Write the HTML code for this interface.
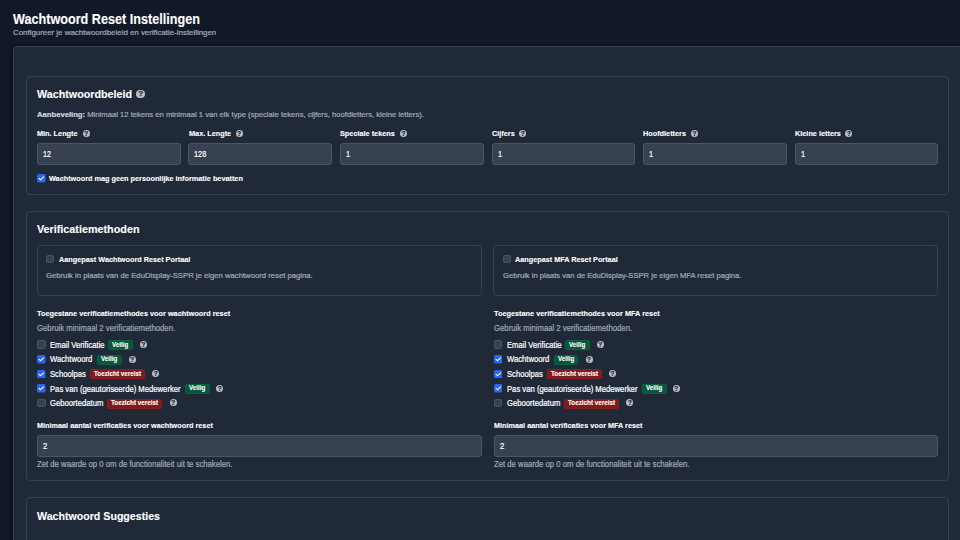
<!DOCTYPE html>
<html><head><meta charset="utf-8"><style>
html,body{margin:0;padding:0;}
body{width:960px;height:540px;overflow:hidden;background:#111827;position:relative;font-family:"Liberation Sans", sans-serif;}
.t{position:absolute;white-space:nowrap;line-height:normal;transform-origin:0 0;}
.b{position:absolute;}
.hi{border-radius:50%;background:#b9bec6;text-align:center;overflow:hidden;}
.hi span{display:block;font-weight:bold;color:#1a2230;-webkit-text-stroke:0.2px #1a2230;}
</style></head><body>
<div id="t0" class="t" style="left:13.00px;top:11.23px;font-size:14px;font-weight:bold;color:#ffffff;transform:scaleX(0.9021);-webkit-text-stroke:0.12px currentColor;">Wachtwoord Reset Instellingen</div>
<div id="t1" class="t" style="left:13.00px;top:27.66px;font-size:8.0px;font-weight:normal;color:#a1a8b3;transform:scaleX(0.9850);-webkit-text-stroke:0.22px currentColor;">Configureer je wachtwoordbeleid en verificatie-instellingen</div>
<div class="b" style="left:13.00px;top:46.00px;width:1000.00px;height:600.00px;background:#1f2937;border:1px solid #374151;border-radius:4px;box-sizing:border-box;box-shadow:0 0 3px 1px rgba(0,0,0,.35);"></div>
<div class="b" style="left:26.00px;top:76.00px;width:923.00px;height:118.50px;border:1px solid #374151;border-radius:4px;box-sizing:border-box;"></div>
<div id="t2" class="t" style="left:37.00px;top:88.23px;font-size:10.8px;font-weight:bold;color:#fff;transform:scaleX(0.9940);-webkit-text-stroke:0.12px currentColor;">Wachtwoordbeleid</div>
<div class="b hi" style="left:136.30px;top:89.60px;width:8.8px;height:8.8px;"><span style="font-size:8.10px;line-height:8.8px;">?</span></div>
<div id="t3" class="t" style="left:37.00px;top:110.22px;font-size:7.6px;font-weight:normal;color:#a1a8b3;transform:scaleX(1.0085);-webkit-text-stroke:0.22px currentColor;"><b style="color:#d1d5db">Aanbeveling:</b> Minimaal 12 tekens en minimaal 1 van elk type (speciale tekens, cijfers, hoofdletters, kleine letters).</div>
<div id="t4" class="t" style="left:37.00px;top:129.32px;font-size:7.6px;font-weight:bold;color:#ffffff;transform:scaleX(0.9613);-webkit-text-stroke:0.12px currentColor;">Min. Lengte</div>
<div class="b hi" style="left:82.65px;top:130.40px;width:7.0px;height:7.0px;"><span style="font-size:6.44px;line-height:7.0px;">?</span></div>
<div class="b" style="left:37.00px;top:143.00px;width:144.00px;height:21.70px;background:#374151;border:1px solid #4b5563;border-radius:3px;box-sizing:border-box;"></div>
<div id="t5" class="t" style="left:43.00px;top:148.74px;font-size:8.8px;font-weight:normal;color:#ffffff;transform:scaleX(0.8166);-webkit-text-stroke:0.22px currentColor;">12</div>
<div id="t6" class="t" style="left:188.50px;top:129.32px;font-size:7.6px;font-weight:bold;color:#ffffff;transform:scaleX(0.9612);-webkit-text-stroke:0.12px currentColor;">Max. Lengte</div>
<div class="b hi" style="left:235.79px;top:130.40px;width:7.0px;height:7.0px;"><span style="font-size:6.44px;line-height:7.0px;">?</span></div>
<div class="b" style="left:188.00px;top:143.00px;width:144.00px;height:21.70px;background:#374151;border:1px solid #4b5563;border-radius:3px;box-sizing:border-box;"></div>
<div id="t7" class="t" style="left:194.00px;top:148.74px;font-size:8.8px;font-weight:normal;color:#ffffff;transform:scaleX(0.8306);-webkit-text-stroke:0.22px currentColor;">128</div>
<div id="t8" class="t" style="left:340.00px;top:129.32px;font-size:7.6px;font-weight:bold;color:#ffffff;transform:scaleX(0.9611);-webkit-text-stroke:0.12px currentColor;">Speciale tekens</div>
<div class="b hi" style="left:399.88px;top:130.40px;width:7.0px;height:7.0px;"><span style="font-size:6.44px;line-height:7.0px;">?</span></div>
<div class="b" style="left:340.00px;top:143.00px;width:144.00px;height:21.70px;background:#374151;border:1px solid #4b5563;border-radius:3px;box-sizing:border-box;"></div>
<div id="t9" class="t" style="left:346.00px;top:148.74px;font-size:8.8px;font-weight:normal;color:#ffffff;transform:scaleX(0.8153);-webkit-text-stroke:0.22px currentColor;">1</div>
<div id="t10" class="t" style="left:491.50px;top:129.32px;font-size:7.6px;font-weight:bold;color:#ffffff;transform:scaleX(0.9611);-webkit-text-stroke:0.12px currentColor;">Cijfers</div>
<div class="b hi" style="left:519.32px;top:130.40px;width:7.0px;height:7.0px;"><span style="font-size:6.44px;line-height:7.0px;">?</span></div>
<div class="b" style="left:492.00px;top:143.00px;width:143.00px;height:21.70px;background:#374151;border:1px solid #4b5563;border-radius:3px;box-sizing:border-box;"></div>
<div id="t11" class="t" style="left:498.00px;top:148.74px;font-size:8.8px;font-weight:normal;color:#ffffff;transform:scaleX(0.8153);-webkit-text-stroke:0.22px currentColor;">1</div>
<div id="t12" class="t" style="left:643.00px;top:129.32px;font-size:7.6px;font-weight:bold;color:#ffffff;transform:scaleX(0.9610);-webkit-text-stroke:0.12px currentColor;">Hoofdletters</div>
<div class="b hi" style="left:691.09px;top:130.40px;width:7.0px;height:7.0px;"><span style="font-size:6.44px;line-height:7.0px;">?</span></div>
<div class="b" style="left:643.00px;top:143.00px;width:144.00px;height:21.70px;background:#374151;border:1px solid #4b5563;border-radius:3px;box-sizing:border-box;"></div>
<div id="t13" class="t" style="left:649.00px;top:148.74px;font-size:8.8px;font-weight:normal;color:#ffffff;transform:scaleX(0.8153);-webkit-text-stroke:0.22px currentColor;">1</div>
<div id="t14" class="t" style="left:794.50px;top:129.32px;font-size:7.6px;font-weight:bold;color:#ffffff;transform:scaleX(0.9611);-webkit-text-stroke:0.12px currentColor;">Kleine letters</div>
<div class="b hi" style="left:845.45px;top:130.40px;width:7.0px;height:7.0px;"><span style="font-size:6.44px;line-height:7.0px;">?</span></div>
<div class="b" style="left:795.00px;top:143.00px;width:143.00px;height:21.70px;background:#374151;border:1px solid #4b5563;border-radius:3px;box-sizing:border-box;"></div>
<div id="t15" class="t" style="left:801.00px;top:148.74px;font-size:8.8px;font-weight:normal;color:#ffffff;transform:scaleX(0.8153);-webkit-text-stroke:0.22px currentColor;">1</div>
<svg class="b" style="left:37.00px;top:174.00px" width="8.6" height="8.6" viewBox="0 0 16 16"><rect x="0" y="0" width="16" height="16" rx="3.5" fill="#2a66ee"/><path d="M3.8 8.3L6.7 10.8L12.4 5.4" stroke="#fff" stroke-width="1.9" fill="none" stroke-linecap="round" stroke-linejoin="round"/></svg>
<div id="t16" class="t" style="left:49.40px;top:173.72px;font-size:7.6px;font-weight:bold;color:#ffffff;transform:scaleX(0.9606);-webkit-text-stroke:0.12px currentColor;">Wachtwoord mag geen persoonlijke informatie bevatten</div>
<div class="b" style="left:26.00px;top:211.25px;width:923.00px;height:269.50px;border:1px solid #374151;border-radius:4px;box-sizing:border-box;"></div>
<div id="t17" class="t" style="left:36.90px;top:222.63px;font-size:10.8px;font-weight:bold;color:#fff;-webkit-text-stroke:0.12px currentColor;">Verificatiemethoden</div>
<div class="b" style="left:37.40px;top:245.00px;width:445.00px;height:51.00px;border:1px solid #374151;border-radius:4px;box-sizing:border-box;"></div>
<div class="b" style="left:46.10px;top:255.00px;width:7.90px;height:7.90px;background:#374151;border:1px solid #4b5563;border-radius:2px;box-sizing:border-box;"></div>
<div id="t18" class="t" style="left:58.50px;top:254.72px;font-size:7.6px;font-weight:bold;color:#ffffff;transform:scaleX(0.9594);-webkit-text-stroke:0.12px currentColor;">Aangepast Wachtwoord Reset Portaal</div>
<div id="t19" class="t" style="left:46.00px;top:271.21px;font-size:7.5px;font-weight:normal;color:#a1a8b3;transform:scaleX(1.0270);-webkit-text-stroke:0.22px currentColor;">Gebruik in plaats van de EduDisplay-SSPR je eigen wachtwoord reset pagina.</div>
<div id="t20" class="t" style="left:37.40px;top:309.22px;font-size:7.6px;font-weight:bold;color:#ffffff;transform:scaleX(0.9645);-webkit-text-stroke:0.12px currentColor;">Toegestane verificatiemethodes voor wachtwoord reset</div>
<div id="t21" class="t" style="left:37.20px;top:322.82px;font-size:8.6px;font-weight:normal;color:#a1a8b3;transform:scaleX(0.9007);-webkit-text-stroke:0.22px currentColor;">Gebruik minimaal 2 verificatiemethoden.</div>
<div class="b" style="left:37.10px;top:340.40px;width:8.50px;height:8.50px;background:#374151;border:1px solid #4b5563;border-radius:2px;box-sizing:border-box;"></div>
<div id="t22" class="t" style="left:49.80px;top:339.72px;font-size:8.6px;font-weight:normal;color:#ffffff;transform:scaleX(0.8936);-webkit-text-stroke:0.22px currentColor;">Email Verificatie</div>
<div class="b" style="left:108.30px;top:340.10px;width:24.90px;height:10.10px;background:#05583c;border:1px solid #086240;box-sizing:border-box;border-radius:2px;"></div>
<div id="t23" class="t" style="left:112.35px;top:340.66px;font-size:7.0px;font-weight:bold;color:#ffffff;transform:scaleX(0.8854);-webkit-text-stroke:0.12px currentColor;">Veilig</div>
<div class="b hi" style="left:140.00px;top:341.00px;width:7.0px;height:7.0px;"><span style="font-size:6.44px;line-height:7.0px;">?</span></div>
<svg class="b" style="left:37.10px;top:355.00px" width="8.5" height="8.5" viewBox="0 0 16 16"><rect x="0" y="0" width="16" height="16" rx="3.5" fill="#2a66ee"/><path d="M3.8 8.3L6.7 10.8L12.4 5.4" stroke="#fff" stroke-width="1.9" fill="none" stroke-linecap="round" stroke-linejoin="round"/></svg>
<div id="t24" class="t" style="left:49.80px;top:354.32px;font-size:8.6px;font-weight:normal;color:#ffffff;transform:scaleX(0.8935);-webkit-text-stroke:0.22px currentColor;">Wachtwoord</div>
<div class="b" style="left:96.90px;top:354.70px;width:24.90px;height:10.10px;background:#05583c;border:1px solid #086240;box-sizing:border-box;border-radius:2px;"></div>
<div id="t25" class="t" style="left:100.95px;top:355.26px;font-size:7.0px;font-weight:bold;color:#ffffff;transform:scaleX(0.8854);-webkit-text-stroke:0.12px currentColor;">Veilig</div>
<div class="b hi" style="left:128.80px;top:355.60px;width:7.0px;height:7.0px;"><span style="font-size:6.44px;line-height:7.0px;">?</span></div>
<svg class="b" style="left:37.10px;top:369.60px" width="8.5" height="8.5" viewBox="0 0 16 16"><rect x="0" y="0" width="16" height="16" rx="3.5" fill="#2a66ee"/><path d="M3.8 8.3L6.7 10.8L12.4 5.4" stroke="#fff" stroke-width="1.9" fill="none" stroke-linecap="round" stroke-linejoin="round"/></svg>
<div id="t26" class="t" style="left:49.80px;top:368.92px;font-size:8.6px;font-weight:normal;color:#ffffff;transform:scaleX(0.8935);-webkit-text-stroke:0.22px currentColor;">Schoolpas</div>
<div class="b" style="left:89.90px;top:369.30px;width:55.40px;height:10.10px;background:#7c1c1c;border:1px solid #8f1c1c;box-sizing:border-box;border-radius:2px;"></div>
<div id="t27" class="t" style="left:93.80px;top:369.86px;font-size:7.0px;font-weight:bold;color:#ffffff;transform:scaleX(0.8971);-webkit-text-stroke:0.12px currentColor;">Toezicht vereist</div>
<div class="b hi" style="left:152.30px;top:370.20px;width:7.0px;height:7.0px;"><span style="font-size:6.44px;line-height:7.0px;">?</span></div>
<svg class="b" style="left:37.10px;top:384.20px" width="8.5" height="8.5" viewBox="0 0 16 16"><rect x="0" y="0" width="16" height="16" rx="3.5" fill="#2a66ee"/><path d="M3.8 8.3L6.7 10.8L12.4 5.4" stroke="#fff" stroke-width="1.9" fill="none" stroke-linecap="round" stroke-linejoin="round"/></svg>
<div id="t28" class="t" style="left:49.80px;top:383.52px;font-size:8.6px;font-weight:normal;color:#ffffff;transform:scaleX(0.8936);-webkit-text-stroke:0.22px currentColor;">Pas van (geautoriseerde) Medewerker</div>
<div class="b" style="left:185.10px;top:383.90px;width:24.90px;height:10.10px;background:#05583c;border:1px solid #086240;box-sizing:border-box;border-radius:2px;"></div>
<div id="t29" class="t" style="left:189.15px;top:384.46px;font-size:7.0px;font-weight:bold;color:#ffffff;transform:scaleX(0.8854);-webkit-text-stroke:0.12px currentColor;">Veilig</div>
<div class="b hi" style="left:216.10px;top:384.80px;width:7.0px;height:7.0px;"><span style="font-size:6.44px;line-height:7.0px;">?</span></div>
<div class="b" style="left:37.10px;top:398.80px;width:8.50px;height:8.50px;background:#374151;border:1px solid #4b5563;border-radius:2px;box-sizing:border-box;"></div>
<div id="t30" class="t" style="left:49.80px;top:398.12px;font-size:8.6px;font-weight:normal;color:#ffffff;transform:scaleX(0.8936);-webkit-text-stroke:0.22px currentColor;">Geboortedatum</div>
<div class="b" style="left:107.10px;top:398.50px;width:55.40px;height:10.10px;background:#7c1c1c;border:1px solid #8f1c1c;box-sizing:border-box;border-radius:2px;"></div>
<div id="t31" class="t" style="left:111.00px;top:399.06px;font-size:7.0px;font-weight:bold;color:#ffffff;transform:scaleX(0.8971);-webkit-text-stroke:0.12px currentColor;">Toezicht vereist</div>
<div class="b hi" style="left:169.70px;top:399.40px;width:7.0px;height:7.0px;"><span style="font-size:6.44px;line-height:7.0px;">?</span></div>
<div id="t32" class="t" style="left:37.40px;top:421.22px;font-size:7.6px;font-weight:bold;color:#ffffff;transform:scaleX(0.9579);-webkit-text-stroke:0.12px currentColor;">Minimaal aantal verificaties voor wachtwoord reset</div>
<div class="b" style="left:37.10px;top:435.00px;width:444.50px;height:21.70px;background:#374151;border:1px solid #4b5563;border-radius:3px;box-sizing:border-box;"></div>
<div id="t33" class="t" style="left:43.10px;top:440.74px;font-size:8.8px;font-weight:normal;color:#ffffff;transform:scaleX(0.8764);-webkit-text-stroke:0.22px currentColor;">2</div>
<div id="t34" class="t" style="left:37.00px;top:459.02px;font-size:8.6px;font-weight:normal;color:#a1a8b3;transform:scaleX(0.8994);-webkit-text-stroke:0.22px currentColor;">Zet de waarde op 0 om de functionaliteit uit te schakelen.</div>
<div class="b" style="left:493.40px;top:245.00px;width:445.00px;height:51.00px;border:1px solid #374151;border-radius:4px;box-sizing:border-box;"></div>
<div class="b" style="left:502.80px;top:255.00px;width:7.90px;height:7.90px;background:#374151;border:1px solid #4b5563;border-radius:2px;box-sizing:border-box;"></div>
<div id="t35" class="t" style="left:515.20px;top:254.72px;font-size:7.6px;font-weight:bold;color:#ffffff;transform:scaleX(0.9569);-webkit-text-stroke:0.12px currentColor;">Aangepast MFA Reset Portaal</div>
<div id="t36" class="t" style="left:502.70px;top:271.21px;font-size:7.5px;font-weight:normal;color:#a1a8b3;transform:scaleX(1.0157);-webkit-text-stroke:0.22px currentColor;">Gebruik in plaats van de EduDisplay-SSPR je eigen MFA reset pagina.</div>
<div id="t37" class="t" style="left:494.10px;top:309.22px;font-size:7.6px;font-weight:bold;color:#ffffff;transform:scaleX(0.9645);-webkit-text-stroke:0.12px currentColor;">Toegestane verificatiemethodes voor MFA reset</div>
<div id="t38" class="t" style="left:493.90px;top:322.82px;font-size:8.6px;font-weight:normal;color:#a1a8b3;transform:scaleX(0.9007);-webkit-text-stroke:0.22px currentColor;">Gebruik minimaal 2 verificatiemethoden.</div>
<div class="b" style="left:493.80px;top:340.40px;width:8.50px;height:8.50px;background:#374151;border:1px solid #4b5563;border-radius:2px;box-sizing:border-box;"></div>
<div id="t39" class="t" style="left:506.50px;top:339.72px;font-size:8.6px;font-weight:normal;color:#ffffff;transform:scaleX(0.8936);-webkit-text-stroke:0.22px currentColor;">Email Verificatie</div>
<div class="b" style="left:565.00px;top:340.10px;width:24.90px;height:10.10px;background:#05583c;border:1px solid #086240;box-sizing:border-box;border-radius:2px;"></div>
<div id="t40" class="t" style="left:569.05px;top:340.66px;font-size:7.0px;font-weight:bold;color:#ffffff;transform:scaleX(0.8854);-webkit-text-stroke:0.12px currentColor;">Veilig</div>
<div class="b hi" style="left:596.70px;top:341.00px;width:7.0px;height:7.0px;"><span style="font-size:6.44px;line-height:7.0px;">?</span></div>
<svg class="b" style="left:493.80px;top:355.00px" width="8.5" height="8.5" viewBox="0 0 16 16"><rect x="0" y="0" width="16" height="16" rx="3.5" fill="#2a66ee"/><path d="M3.8 8.3L6.7 10.8L12.4 5.4" stroke="#fff" stroke-width="1.9" fill="none" stroke-linecap="round" stroke-linejoin="round"/></svg>
<div id="t41" class="t" style="left:506.50px;top:354.32px;font-size:8.6px;font-weight:normal;color:#ffffff;transform:scaleX(0.8935);-webkit-text-stroke:0.22px currentColor;">Wachtwoord</div>
<div class="b" style="left:553.60px;top:354.70px;width:24.90px;height:10.10px;background:#05583c;border:1px solid #086240;box-sizing:border-box;border-radius:2px;"></div>
<div id="t42" class="t" style="left:557.65px;top:355.26px;font-size:7.0px;font-weight:bold;color:#ffffff;transform:scaleX(0.8854);-webkit-text-stroke:0.12px currentColor;">Veilig</div>
<div class="b hi" style="left:585.50px;top:355.60px;width:7.0px;height:7.0px;"><span style="font-size:6.44px;line-height:7.0px;">?</span></div>
<svg class="b" style="left:493.80px;top:369.60px" width="8.5" height="8.5" viewBox="0 0 16 16"><rect x="0" y="0" width="16" height="16" rx="3.5" fill="#2a66ee"/><path d="M3.8 8.3L6.7 10.8L12.4 5.4" stroke="#fff" stroke-width="1.9" fill="none" stroke-linecap="round" stroke-linejoin="round"/></svg>
<div id="t43" class="t" style="left:506.50px;top:368.92px;font-size:8.6px;font-weight:normal;color:#ffffff;transform:scaleX(0.8935);-webkit-text-stroke:0.22px currentColor;">Schoolpas</div>
<div class="b" style="left:546.60px;top:369.30px;width:55.40px;height:10.10px;background:#7c1c1c;border:1px solid #8f1c1c;box-sizing:border-box;border-radius:2px;"></div>
<div id="t44" class="t" style="left:550.50px;top:369.86px;font-size:7.0px;font-weight:bold;color:#ffffff;transform:scaleX(0.8971);-webkit-text-stroke:0.12px currentColor;">Toezicht vereist</div>
<div class="b hi" style="left:609.00px;top:370.20px;width:7.0px;height:7.0px;"><span style="font-size:6.44px;line-height:7.0px;">?</span></div>
<svg class="b" style="left:493.80px;top:384.20px" width="8.5" height="8.5" viewBox="0 0 16 16"><rect x="0" y="0" width="16" height="16" rx="3.5" fill="#2a66ee"/><path d="M3.8 8.3L6.7 10.8L12.4 5.4" stroke="#fff" stroke-width="1.9" fill="none" stroke-linecap="round" stroke-linejoin="round"/></svg>
<div id="t45" class="t" style="left:506.50px;top:383.52px;font-size:8.6px;font-weight:normal;color:#ffffff;transform:scaleX(0.8936);-webkit-text-stroke:0.22px currentColor;">Pas van (geautoriseerde) Medewerker</div>
<div class="b" style="left:641.80px;top:383.90px;width:24.90px;height:10.10px;background:#05583c;border:1px solid #086240;box-sizing:border-box;border-radius:2px;"></div>
<div id="t46" class="t" style="left:645.85px;top:384.46px;font-size:7.0px;font-weight:bold;color:#ffffff;transform:scaleX(0.8854);-webkit-text-stroke:0.12px currentColor;">Veilig</div>
<div class="b hi" style="left:672.80px;top:384.80px;width:7.0px;height:7.0px;"><span style="font-size:6.44px;line-height:7.0px;">?</span></div>
<div class="b" style="left:493.80px;top:398.80px;width:8.50px;height:8.50px;background:#374151;border:1px solid #4b5563;border-radius:2px;box-sizing:border-box;"></div>
<div id="t47" class="t" style="left:506.50px;top:398.12px;font-size:8.6px;font-weight:normal;color:#ffffff;transform:scaleX(0.8936);-webkit-text-stroke:0.22px currentColor;">Geboortedatum</div>
<div class="b" style="left:563.80px;top:398.50px;width:55.40px;height:10.10px;background:#7c1c1c;border:1px solid #8f1c1c;box-sizing:border-box;border-radius:2px;"></div>
<div id="t48" class="t" style="left:567.70px;top:399.06px;font-size:7.0px;font-weight:bold;color:#ffffff;transform:scaleX(0.8971);-webkit-text-stroke:0.12px currentColor;">Toezicht vereist</div>
<div class="b hi" style="left:626.40px;top:399.40px;width:7.0px;height:7.0px;"><span style="font-size:6.44px;line-height:7.0px;">?</span></div>
<div id="t49" class="t" style="left:494.10px;top:421.22px;font-size:7.6px;font-weight:bold;color:#ffffff;transform:scaleX(0.9579);-webkit-text-stroke:0.12px currentColor;">Minimaal aantal verificaties voor MFA reset</div>
<div class="b" style="left:493.80px;top:435.00px;width:444.30px;height:21.70px;background:#374151;border:1px solid #4b5563;border-radius:3px;box-sizing:border-box;"></div>
<div id="t50" class="t" style="left:499.80px;top:440.74px;font-size:8.8px;font-weight:normal;color:#ffffff;transform:scaleX(0.8764);-webkit-text-stroke:0.22px currentColor;">2</div>
<div id="t51" class="t" style="left:493.70px;top:459.02px;font-size:8.6px;font-weight:normal;color:#a1a8b3;transform:scaleX(0.8994);-webkit-text-stroke:0.22px currentColor;">Zet de waarde op 0 om de functionaliteit uit te schakelen.</div>
<div class="b" style="left:26.00px;top:497.00px;width:923.00px;height:100.00px;border:1px solid #374151;border-radius:4px;box-sizing:border-box;"></div>
<div id="t52" class="t" style="left:37.00px;top:509.73px;font-size:10.8px;font-weight:bold;color:#fff;transform:scaleX(0.9841);-webkit-text-stroke:0.12px currentColor;">Wachtwoord Suggesties</div>
</body></html>
